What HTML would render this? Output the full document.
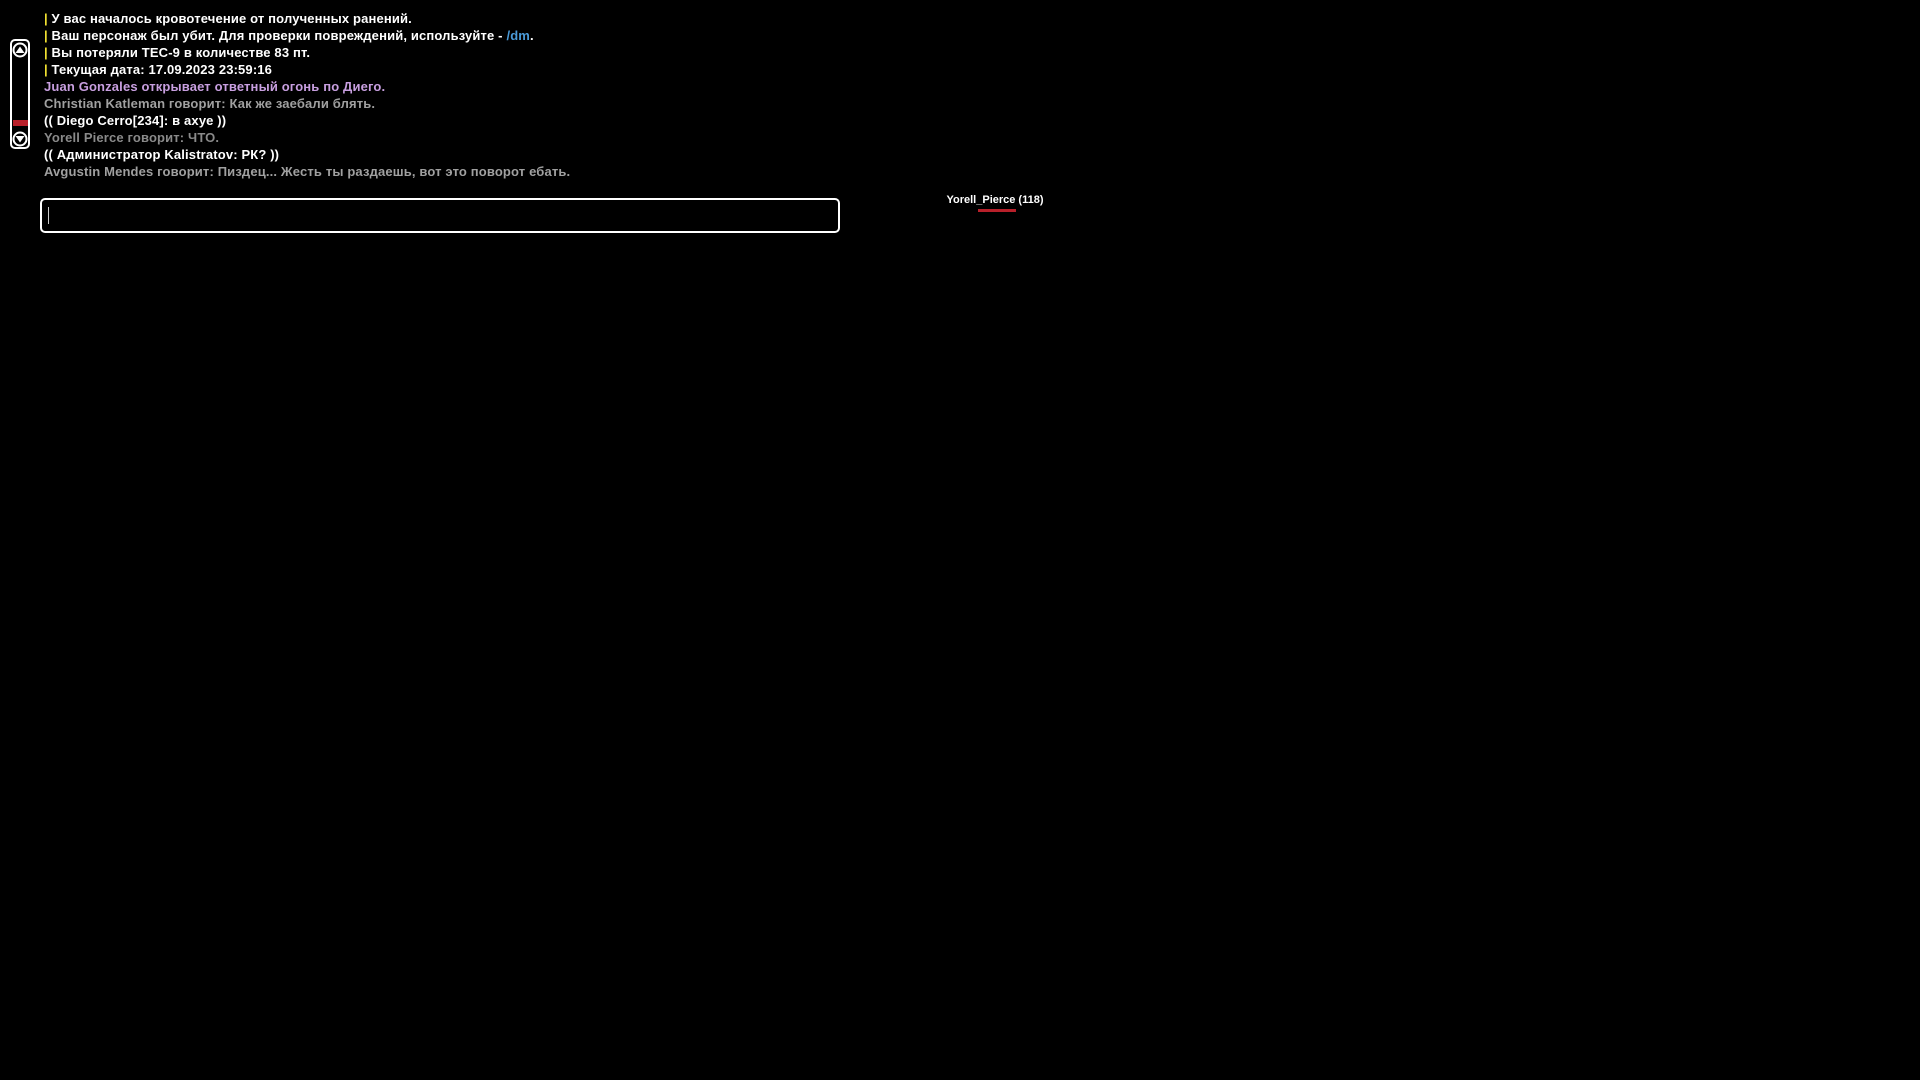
<!DOCTYPE html>
<html><head><meta charset="utf-8"><style>
html,body{margin:0;padding:0;background:#000;width:1920px;height:1080px;overflow:hidden}
.chat{position:absolute;left:44px;top:10px;font-family:"Liberation Sans",sans-serif;font-weight:bold;font-size:13px;letter-spacing:0.15px;line-height:17px;white-space:nowrap;text-shadow:1px 1px 0 #000}
.w{color:#fff}.p{color:#c89fe0}.g{color:#a0a0a0}.g2{color:#8a8a8a}
.y{color:#f0e030}.b{color:#4a9ad8}
.box{position:absolute;left:40px;top:198px;width:800px;height:35px;border:2px solid #fff;border-radius:5px;box-sizing:border-box}
.caret{position:absolute;left:48px;top:207px;width:1px;height:17px;background:#ccc}
.tag{position:absolute;left:900px;top:194px;width:190px;text-align:center;font-family:"Liberation Sans",sans-serif;font-weight:bold;font-size:11px;color:#fff}
.bar{position:absolute;left:978px;top:209px;width:38px;height:3px;background:#b8202a}
</style></head><body>
<div class="chat">
<div class="w"><span class="y">|</span> У вас началось кровотечение от полученных ранений.</div>
<div class="w"><span class="y">|</span> Ваш персонаж был убит. Для проверки повреждений, используйте - <span class="b">/dm</span>.</div>
<div class="w"><span class="y">|</span> Вы потеряли TEC-9 в количестве 83 пт.</div>
<div class="w"><span class="y">|</span> Текущая дата: 17.09.2023 23:59:16</div>
<div class="p">Juan Gonzales открывает ответный огонь по Диего.</div>
<div class="g">Christian Katleman говорит: Как же заебали блять.</div>
<div class="w">(( Diego Cerro[234]: в ахуе ))</div>
<div class="g2">Yorell Pierce говорит: ЧТО.</div>
<div class="w">(( Администратор Kalistratov: РК? ))</div>
<div class="g">Avgustin Mendes говорит: Пиздец... Жесть ты раздаешь, вот это поворот ебать.</div>
</div>
<svg style="position:absolute;left:0;top:0" width="40" height="160">
<rect x="11" y="40" width="18" height="108" rx="4" fill="none" stroke="#fff" stroke-width="2"/>
<circle cx="20" cy="50" r="6.5" fill="none" stroke="#fff" stroke-width="2"/>
<path d="M15.5 53 L20 46.5 L24.5 53Z" fill="#fff"/>
<circle cx="20" cy="139" r="6.5" fill="none" stroke="#fff" stroke-width="2"/>
<path d="M15.5 136 L20 142.5 L24.5 136Z" fill="#fff"/>
<rect x="13" y="120" width="15" height="6" fill="#b8202a"/>
</svg>
<div class="box"></div><div class="caret"></div>
<div class="tag">Yorell_Pierce (118)</div><div class="bar"></div>
</body></html>
